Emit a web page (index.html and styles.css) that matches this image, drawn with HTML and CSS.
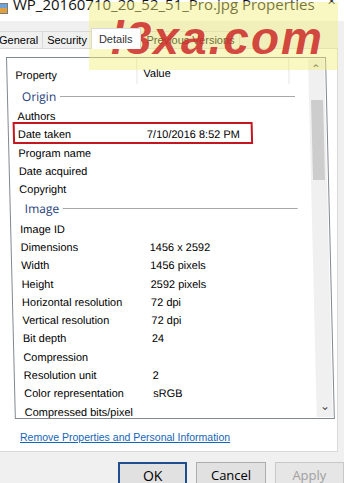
FILE: index.html
```html
<!DOCTYPE html>
<html lang="en">
<head>
    <meta charset="UTF-8">
    <title>WP_20160710_20_52_51_Pro.jpg Properties</title>
    <link rel="stylesheet" href="styles.css">
</head>
<body>
    <div class="window">
        <div class="titlebar">
            <span class="app-icon"></span>
            <span class="title">WP_20160710_20_52_51_Pro.jpg Properties</span>
            <span class="close">&#10005;</span>
        </div>

        <div class="tabs">
            <div class="tab">General</div>
            <div class="tab">Security</div>
            <div class="tab active">Details</div>
            <div class="tab">Previous Versions</div>
        </div>

        <div class="panel">
            <div class="listbox">
                <div class="list">
                    <div class="list-head">
                        <div class="col-prop">Property</div>
                        <div class="col-val">Value</div>
                        <div class="col-rest"></div>
                    </div>

                    <!-- Origin -->
                    <div class="group"><span>Origin</span></div>
                    <div class="row"><span class="prop">Authors</span><span class="val"></span></div>
                    <div class="row marked"><span class="prop">Date taken</span><span class="val">7/10/2016 8:52 PM</span></div>
                    <div class="row"><span class="prop">Program name</span><span class="val"></span></div>
                    <div class="row"><span class="prop">Date acquired</span><span class="val"></span></div>
                    <div class="row"><span class="prop">Copyright</span><span class="val"></span></div>

                    <!-- Image -->
                    <div class="group"><span>Image</span></div>
                    <div class="row"><span class="prop">Image ID</span><span class="val"></span></div>
                    <div class="row"><span class="prop">Dimensions</span><span class="val">1456 x 2592</span></div>
                    <div class="row"><span class="prop">Width</span><span class="val">1456 pixels</span></div>
                    <div class="row"><span class="prop">Height</span><span class="val">2592 pixels</span></div>
                    <div class="row"><span class="prop">Horizontal resolution</span><span class="val">72 dpi</span></div>
                    <div class="row"><span class="prop">Vertical resolution</span><span class="val">72 dpi</span></div>
                    <div class="row"><span class="prop">Bit depth</span><span class="val">24</span></div>
                    <div class="row"><span class="prop">Compression</span><span class="val"></span></div>
                    <div class="row"><span class="prop">Resolution unit</span><span class="val">2</span></div>
                    <div class="row"><span class="prop">Color representation</span><span class="val">sRGB</span></div>
                    <div class="row"><span class="prop">Compressed bits/pixel</span><span class="val"></span></div>
                </div>
                <div class="scrollbar">
                    <div class="arrow">&#8963;</div>
                    <div class="track">
                        <div class="thumb"></div>
                    </div>
                    <div class="arrow down">&#8964;</div>
                </div>
            </div>
            <a class="remove-link" href="#">Remove Properties and Personal Information</a>
        </div>

        <div class="buttons">
            <button class="btn default">OK</button>
            <button class="btn">Cancel</button>
            <button class="btn disabled">Apply</button>
        </div>

        <div class="watermark">l3xa.com</div>
    </div>
</body>
</html>
```

FILE: styles.css
```css
body {
    margin: 0;
    padding: 0;
    background-color: #f0f0f0;
    font-family: "Liberation Sans", Arial, sans-serif;
    color: #000;
    overflow: hidden;
}

.window {
    position: relative;
    width: 344px;
    height: 483px;
    overflow: hidden;
    background-color: #f0f0f0;
}

/* title bar, cut off at the top */
.titlebar {
    height: 21px;
    background-color: #fff;
    display: flex;
    align-items: flex-end;
}

.app-icon {
    width: 7px;
    height: 9px;
    margin: 0 5px 7px 0;
    background: linear-gradient(#6fa3d8 40%, #e0a040 40%);
    border: 1px solid #7a7a7a;
    border-left: none;
}

.title {
    flex: 1;
    font-family: "Open Sans", sans-serif;
    font-size: 15px;
    line-height: 15px;
    margin-bottom: 9px;
    color: #111;
    white-space: nowrap;
}

.close {
    font-size: 11px;
    align-self: flex-start;
    margin: -5px 8px 0 0;
    color: #333;
}

/* tabs */
.tabs {
    display: flex;
    align-items: flex-end;
    height: 27px;
    margin-left: -6px;
}

.tab {
    height: 16px;
    padding: 0 4px;
    border: 1px solid #d9d9d9;
    border-bottom: none;
    background-color: #f0f0f0;
    font-size: 11px;
    line-height: 17px;
    margin-right: -1px;
}

.tab.active {
    height: 20px;
    line-height: 20px;
    background-color: #fff;
    padding: 0 7px;
    margin: 0 1px -1px 0;
    position: relative;
    z-index: 1;
    color: #333;
}

/* tab page */
.panel {
    height: 404px;
    width: 338px;
    background-color: #fff;
    border: 1px solid #d9d9d9;
    border-left: none;
    box-sizing: border-box;
    padding: 8px 0 0 6px;
}

/* the screenshot was taken at a slight slant */
.listbox {
    width: 320px;
    height: 362px;
    box-sizing: border-box;
    border: 1px solid #828790;
    display: flex;
    overflow: hidden;
    transform: skewX(1.4deg);
    transform-origin: top left;
}

.list {
    flex: 1;
    overflow: hidden;
}

.list-head {
    display: flex;
    height: 28px;
    font-size: 11px;
}

.list-head > div {
    border-right: 1px solid #e5e5e5;
    height: 26px;
    box-sizing: border-box;
}

.col-prop {
    width: 130px;
    padding: 11px 0 0 8px;
}

.col-val {
    width: 152px;
    padding: 9px 0 0 6px;
}

.col-rest {
    flex: 1;
    border-right: none !important;
}

.group {
    height: 21px;
    display: flex;
    align-items: center;
    padding: 0 14px 0 14px;
    font-family: "Open Sans", sans-serif;
    font-size: 12px;
    color: #1e3c78;
}

.group::after {
    content: "";
    flex: 1;
    height: 1px;
    margin-left: 4px;
    background-color: #a8a8a8;
}

.row {
    position: relative;
    height: 18.3px;
    display: flex;
    align-items: center;
    font-size: 11px;
    white-space: nowrap;
}

.prop {
    width: 128px;
    padding-left: 9px;
}

.val {
    padding-left: 1px;
}

/* red annotation box around the highlighted row */
.row.marked::after {
    content: "";
    position: absolute;
    left: 4px;
    top: -3px;
    width: 236px;
    height: 18px;
    border: 2px solid #c3161e;
}

/* scroll bar */
.scrollbar {
    width: 16px;
    background-color: #f0f0f0;
    display: flex;
    flex-direction: column;
    margin: 1px 1px 1px 0;
}

.arrow {
    height: 17px;
    font-size: 12px;
    line-height: 20px;
    text-align: center;
    color: #555;
}

.arrow.down {
    line-height: 12px;
}

.track {
    flex: 1;
    padding-top: 24px;
}

.thumb {
    height: 80px;
    margin: 0 2px;
    background-color: #cdcdcd;
}

.remove-link {
    display: block;
    margin: 12px 0 0 14px;
    font-size: 10.5px;
    color: #1565b8;
    text-decoration: underline;
}

/* dialog buttons */
.buttons {
    display: flex;
    padding: 10px 0 0 118px;
    gap: 9px;
}

.btn {
    width: 73px;
    height: 24px;
    box-sizing: border-box;
    background-color: #e1e1e1;
    border: 1px solid #adadad;
    font-family: "Open Sans", sans-serif;
    font-size: 13px;
    padding: 2px 0 0 0;
    color: #000;
}

.btn.default {
    border: 2px solid #1f4f8f;
    font-size: 14px;
}

.btn.disabled {
    color: #a0a0a0;
    background-color: #e6e6e6;
    border-color: #c8c8c8;
}

/* site watermark stamped over the top of the picture */
.watermark {
    position: absolute;
    left: 89px;
    top: 2px;
    width: 249px;
    height: 68px;
    background-color: rgba(242, 238, 120, 0.45);
    font-family: "Liberation Sans", Arial, sans-serif;
    font-weight: bold;
    font-style: italic;
    font-size: 46px;
    letter-spacing: 2px;
    line-height: 72px;
    padding-left: 22px;
    box-sizing: border-box;
    color: rgba(205, 40, 40, 0.85);
}
```
